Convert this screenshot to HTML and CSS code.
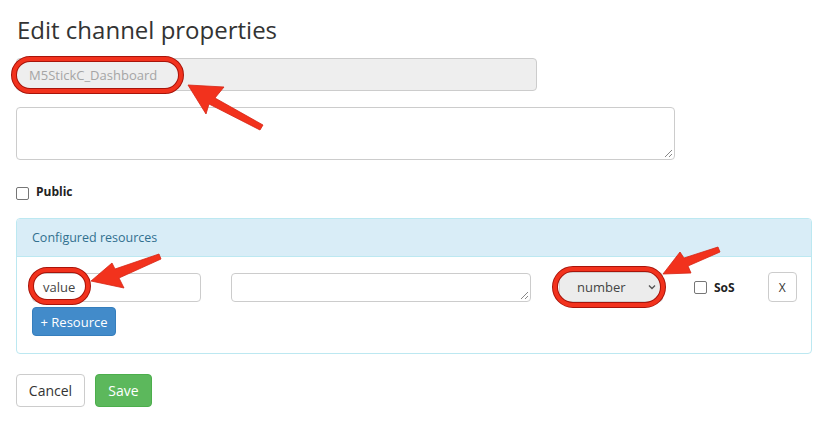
FILE: index.html
```html
<!DOCTYPE html>
<html>
<head>
<meta charset="utf-8">
<link rel="stylesheet" href="styles.css">
</head>
<body>
<div class="page">
  <h1 class="title">Edit channel properties</h1>
  <div class="field name-field">M5StickC_Dashboard</div>
  <div class="area desc-area"><span class="grip"></span></div>
  <label class="check-row"><span class="checkbox"></span><span class="check-label">Public</span></label>
  <section class="panel">
    <div class="panel-heading">Configured resources</div>
    <div class="panel-body">
      <div class="res-row">
        <div class="field res-name">value</div>
        <div class="area res-desc"><span class="grip"></span></div>
        <div class="select">
          <span>number</span>
          <svg class="chev" width="8" height="6" viewBox="0 0 8 6"><path d="M1 1.5 L4 4.5 L7 1.5" fill="none" stroke="#555" stroke-width="1.4"/></svg>
        </div>
        <label class="sos"><span class="checkbox"></span><span class="check-label">SoS</span></label>
        <button class="btn btn-x">X</button>
      </div>
      <button class="btn btn-primary">+ Resource</button>
    </div>
  </section>
  <div class="actions">
    <button class="btn btn-default">Cancel</button>
    <button class="btn btn-success">Save</button>
  </div>
</div>
<svg class="annot" width="822" height="431" viewBox="0 0 822 431">
  <g fill="none">
    <rect x="14" y="59" width="167" height="32" rx="16" stroke="#a8140a" stroke-width="6"/>
    <rect x="14" y="59" width="167" height="32" rx="16" stroke="#f2321d" stroke-width="4"/>
    <rect x="31" y="270" width="57" height="32" rx="16" stroke="#a8140a" stroke-width="6"/>
    <rect x="31" y="270" width="57" height="32" rx="16" stroke="#f2321d" stroke-width="4"/>
    <rect x="555" y="269" width="108" height="36" rx="18" stroke="#a8140a" stroke-width="6"/>
    <rect x="555" y="269" width="108" height="36" rx="18" stroke="#f2321d" stroke-width="4"/>
  </g>
  <g fill="#f2321d" stroke="#d62514" stroke-width="0.8" stroke-linejoin="round">
    <polygon points="188,85 224,87 215,98 263,125 260,130 209,104 206,114"/>
    <polygon points="91,281 112,263 115,269 159,254 161,259 119,278 124,288"/>
    <polygon points="663,274 680,252 684,258 718,247 720,252 688,266 691,273"/>
  </g>
</svg>
</body>
</html>
```

FILE: styles.css
```css
html, body {
  margin: 0;
  padding: 0;
  background: #fff;
}
body {
  position: relative;
  width: 822px;
  height: 431px;
  overflow: hidden;
  font-family: "Open Sans", "Liberation Sans", sans-serif;
  font-size: 13px;
  color: #333;
}
.page {
  padding: 0 16px;
  display: flex;
  flex-direction: column;
  align-items: flex-start;
}
.title {
  margin: 13px 0 0 1px;
  font-size: 24px;
  font-weight: 400;
  line-height: 33px;
  color: #333;
}
.field {
  box-sizing: border-box;
  border: 1px solid #ccc;
  border-radius: 4px;
  background: #fff;
  display: flex;
  align-items: center;
  padding: 0 12px;
  color: #555;
}
.name-field {
  margin-top: 12px;
  width: 521px;
  height: 33px;
  background: #eee;
  color: #a5a5a5;
}
.area {
  position: relative;
  box-sizing: border-box;
  border: 1px solid #ccc;
  border-radius: 4px;
  background: #fff;
}
.grip {
  position: absolute;
  right: 2px;
  bottom: 2px;
  width: 7px;
  height: 7px;
  background: linear-gradient(135deg, transparent 0 45%, #888 45% 55%, transparent 55% 72%, #888 72% 82%, transparent 82%);
}
.desc-area {
  margin-top: 16px;
  width: 659px;
  height: 53px;
}
.check-row {
  margin-top: 23px;
  display: flex;
  align-items: center;
  height: 17px;
}
.checkbox {
  box-sizing: border-box;
  width: 13px;
  height: 13px;
  border: 1px solid #767676;
  border-radius: 2px;
  background: #fff;
  margin-top: 3px;
}
.check-label {
  font-weight: 700;
  font-size: 12px;
  margin-left: 7px;
  color: #222;
}
.panel {
  margin-top: 18px;
  box-sizing: border-box;
  width: 796px;
  border: 1px solid #bce8f1;
  border-radius: 4px;
  overflow: hidden;
}
.panel-heading {
  box-sizing: border-box;
  height: 38px;
  padding: 0 15px;
  display: flex;
  align-items: center;
  background: #d9edf7;
  border-bottom: 1px solid #bce8f1;
  color: #31708f;
  font-size: 12.5px;
}
.panel-body {
  padding: 15px 15px 17px;
  display: flex;
  flex-direction: column;
  align-items: flex-start;
}
.res-row {
  display: flex;
  align-items: center;
  height: 30px;
}
.res-name {
  width: 169px;
  height: 29px;
  padding: 0 10px;
  color: #444;
}
.res-desc {
  margin-left: 30px;
  width: 300px;
  height: 29px;
}
.select {
  margin-left: 28px;
  box-sizing: border-box;
  width: 104px;
  height: 30px;
  border: 1px solid #d0d0d0;
  border-radius: 4px;
  background: #ececec;
  display: flex;
  align-items: center;
  justify-content: space-between;
  padding: 0 6px 0 17px;
  color: #444;
}
.sos {
  margin-left: 31px;
  display: flex;
  align-items: center;
}
.sos .checkbox {
  margin-top: 1px;
}
.btn {
  font-family: "Open Sans", "Liberation Sans", sans-serif;
  font-size: 13px;
  box-sizing: border-box;
  border: 1px solid transparent;
  border-radius: 4px;
  padding: 0;
  cursor: pointer;
}
.btn-x {
  margin-left: 33px;
  width: 29px;
  height: 30px;
  background: #fff;
  border-color: #ccc;
  color: #333;
  font-size: 12px;
}
.btn-primary {
  margin-top: 5px;
  width: 84px;
  height: 29px;
  background: #428bca;
  border-color: #357ebd;
  color: #fff;
}
.actions {
  margin-top: 20px;
  display: flex;
  gap: 10px;
}
.btn-default {
  width: 69px;
  height: 33px;
  background: #fff;
  border-color: #ccc;
  color: #333;
  font-size: 14px;
}
.btn-success {
  width: 57px;
  height: 33px;
  background: #5cb85c;
  border-color: #4cae4c;
  color: #fff;
  font-size: 14px;
}
.annot {
  position: absolute;
  left: 0;
  top: 0;
  pointer-events: none;
}
```
